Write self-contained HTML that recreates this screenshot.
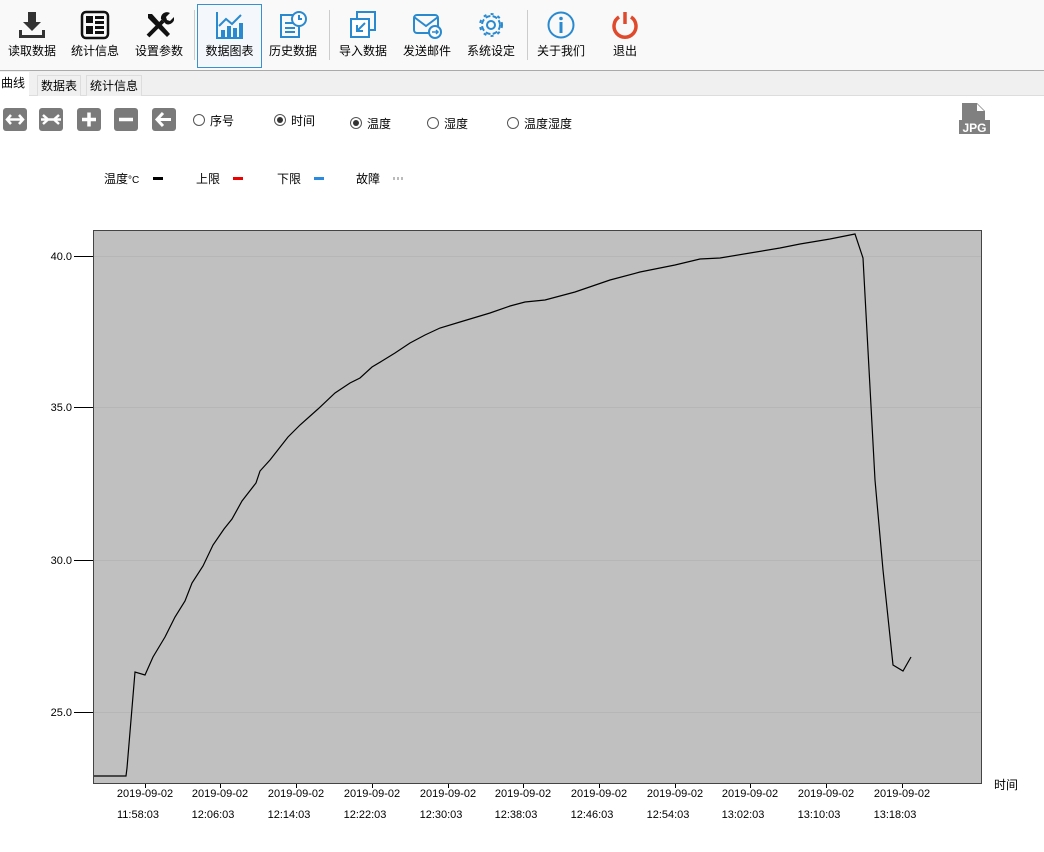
<!DOCTYPE html>
<html><head><meta charset="utf-8"><style>
body{margin:0;width:1044px;height:852px;background:#fff;font-family:"Liberation Sans","Noto Sans CJK SC",sans-serif;position:relative;overflow:hidden}
.tb{position:absolute;left:0;top:0;width:1044px;height:70px;background:#f9f9f9;border-bottom:1px solid #aaa}
.btn{position:absolute;top:4px;width:64px;height:64px;text-align:center;font-size:12px;color:#000}
.btn svg{position:absolute;left:17px;top:6px}
.btn span{position:absolute;left:0;right:0;top:38px}
.sep{position:absolute;top:10px;width:1px;height:50px;background:#ccc}
.tabs{position:absolute;top:71px;left:0;width:1044px;height:24px;background:#f0f0f0;border-bottom:1px solid #ddd}
.tab{position:absolute;top:4px;height:20px;font-size:12px;line-height:20px;padding:0 3px;border:1px solid #ddd;border-bottom:none;background:#f0f0f0}
.ib{position:absolute;top:108px;width:24px;height:23px;background:#7a7a7a;border-radius:3px}
.rd{position:absolute;font-size:12px}
.rd i{display:inline-block;width:10px;height:10px;border:1px solid #555;border-radius:50%;vertical-align:-1px;margin-right:5px;position:relative;background:#fff}
.rd i.on:after{content:"";position:absolute;left:2px;top:2px;width:6px;height:6px;border-radius:50%;background:#333}
.lg{position:absolute;top:170px;font-size:12px}
</style></head><body>
<div class="tb">
<div class="btn" style="left:0"><svg width="30" height="30" viewBox="0 0 30 30"><path d="M11 2h8v10h5l-9 9-9-9h5z" fill="#333"/><path d="M2 20v8h26v-8h-3v5H5v-5z" fill="#333"/></svg><span>读取数据</span></div>
<div class="btn" style="left:63px"><svg width="30" height="30" viewBox="0 0 30 30"><rect x="2" y="2" width="26" height="26" rx="4" fill="none" stroke="#111" stroke-width="2.5"/><rect x="6" y="6" width="7" height="7" fill="#111"/><rect x="6" y="16" width="7" height="8" fill="#111"/><rect x="15" y="6" width="9" height="3" fill="#111"/><rect x="15" y="11" width="9" height="3" fill="#111"/><rect x="15" y="16" width="9" height="3" fill="#111"/><rect x="15" y="21" width="9" height="3" fill="#111"/></svg><span>统计信息</span></div>
<div class="btn" style="left:127px"><svg width="30" height="30" viewBox="0 0 30 30"><path d="M4 4l4 0 18 20-3 3L4 8z" fill="#111"/><path d="M4 26l15-15" stroke="#111" stroke-width="4"/><path d="M17 9a6 6 0 0 1 9-6l-4 4 1 3 3 1 4-4a6 6 0 0 1-8 7z" fill="#111"/></svg><span>设置参数</span></div>
<div class="sep" style="left:194px"></div>
<div class="btn" style="left:197px;border:1px solid #3a8fd0;height:62px;width:63px;background:#f4f8fc"><svg width="30" height="30" viewBox="0 0 30 30" style="top:5px"><path d="M2 2v26h26" fill="none" stroke="#2a8ad0" stroke-width="2"/><rect x="6" y="20" width="4" height="7" fill="#2a8ad0"/><rect x="12" y="16" width="4" height="11" fill="#2a8ad0"/><rect x="18" y="18" width="4" height="9" fill="#2a8ad0"/><rect x="24" y="13" width="4" height="14" fill="#2a8ad0"/><path d="M4 16l7-7 6 5 9-9" fill="none" stroke="#2a8ad0" stroke-width="2"/></svg><span style="top:37px">数据图表</span></div>
<div class="btn" style="left:261px"><svg width="30" height="30" viewBox="0 0 30 30"><rect x="3" y="5" width="18" height="22" fill="none" stroke="#2a8ad0" stroke-width="2"/><path d="M7 13h8M7 18h10M7 22h10" stroke="#2a8ad0" stroke-width="2"/><circle cx="21" cy="9" r="7" fill="#fff" stroke="#2a8ad0" stroke-width="2"/><path d="M21 5v4h3" stroke="#2a8ad0" stroke-width="2" fill="none"/></svg><span>历史数据</span></div>
<div class="sep" style="left:329px"></div>
<div class="btn" style="left:331px"><svg width="30" height="30" viewBox="0 0 30 30"><rect x="9" y="2" width="18" height="18" fill="none" stroke="#2a8ad0" stroke-width="2"/><rect x="3" y="9" width="18" height="18" fill="#fff" stroke="#2a8ad0" stroke-width="2"/><path d="M17 13l-8 8M9 15v6h6" stroke="#2a8ad0" stroke-width="2" fill="none"/></svg><span>导入数据</span></div>
<div class="btn" style="left:395px"><svg width="30" height="30" viewBox="0 0 30 30"><rect x="2" y="5" width="24" height="18" rx="3" fill="none" stroke="#2a8ad0" stroke-width="2"/><path d="M2 7l12 9 12-9" stroke="#2a8ad0" stroke-width="2" fill="none"/><circle cx="23" cy="22" r="6" fill="#fff" stroke="#2a8ad0" stroke-width="2"/><path d="M20 22h6M24 20l2 2-2 2" stroke="#2a8ad0" stroke-width="1.5" fill="none"/></svg><span>发送邮件</span></div>
<div class="btn" style="left:459px"><svg width="30" height="30" viewBox="0 0 30 30"><circle cx="15" cy="15" r="9" fill="none" stroke="#2a8ad0" stroke-width="2" stroke-dasharray="5 2.3"/><circle cx="15" cy="15" r="11" fill="none" stroke="#2a8ad0" stroke-width="2" stroke-dasharray="3 4.3"/><circle cx="15" cy="15" r="4" fill="none" stroke="#2a8ad0" stroke-width="2"/></svg><span>系统设定</span></div>
<div class="sep" style="left:527px"></div>
<div class="btn" style="left:529px"><svg width="30" height="30" viewBox="0 0 30 30"><circle cx="15" cy="15" r="12.5" fill="none" stroke="#2a8ad0" stroke-width="2"/><circle cx="15" cy="8.5" r="1.8" fill="#2a8ad0"/><rect x="13.5" y="12" width="3" height="11" fill="#2a8ad0"/></svg><span>关于我们</span></div>
<div class="btn" style="left:593px"><svg width="30" height="30" viewBox="0 0 30 30"><path d="M9 7A11 11 0 1 0 21 7" fill="none" stroke="#e04a2c" stroke-width="3.5"/><path d="M15 2v12" stroke="#e04a2c" stroke-width="3.5"/></svg><span>退出</span></div>
</div>
<div class="tabs">
<div class="tab" style="left:-3px;top:1px;height:24px;background:#fff;border-color:#fff">曲线</div>
<div class="tab" style="left:37px">数据表</div>
<div class="tab" style="left:86px">统计信息</div>
</div>
<div class="ib" style="left:3px"><svg width="24" height="23"><path d="M4 11.5h16M8 7l-4 4.5 4 4.5M16 7l4 4.5-4 4.5" stroke="#fff" stroke-width="2.5" fill="none"/></svg></div>
<div class="ib" style="left:39px"><svg width="24" height="23"><path d="M2 11.5h20M4 7l5 4.5-5 4.5M20 7l-5 4.5 5 4.5" stroke="#fff" stroke-width="2.5" fill="none"/></svg></div>
<div class="ib" style="left:77px"><svg width="24" height="23"><path d="M5 11.5h14M12 4.5v14" stroke="#fff" stroke-width="3.5"/></svg></div>
<div class="ib" style="left:114px"><svg width="24" height="23"><path d="M5 11.5h14" stroke="#fff" stroke-width="3.5"/></svg></div>
<div class="ib" style="left:152px"><svg width="24" height="23"><path d="M5 11.5h14M11 5l-6 6.5 6 6.5" stroke="#fff" stroke-width="3" fill="none"/></svg></div>
<div class="rd" style="left:193px;top:112px"><i></i>序号</div>
<div class="rd" style="left:274px;top:112px"><i class="on"></i>时间</div>
<div class="rd" style="left:350px;top:115px"><i class="on"></i>温度</div>
<div class="rd" style="left:427px;top:115px"><i></i>湿度</div>
<div class="rd" style="left:507px;top:115px"><i></i>温度湿度</div>
<svg style="position:absolute;left:958px;top:103px" width="34" height="32"><path d="M4 0h15l8 8v10H4z" fill="#808080"/><path d="M19 1v7h7z" fill="#fff"/><rect x="1" y="17" width="31" height="14" fill="#808080"/><text x="16.5" y="29" font-size="12" font-weight="bold" fill="#fff" text-anchor="middle" font-family="Liberation Sans">JPG</text></svg>
<div class="lg" style="left:104px">温度<span style="font-size:10px">°C</span></div><div style="position:absolute;left:153px;top:177px;width:10px;height:3px;background:#000"></div>
<div class="lg" style="left:196px">上限</div><div style="position:absolute;left:233px;top:177px;width:10px;height:3px;background:#e00"></div>
<div class="lg" style="left:277px">下限</div><div style="position:absolute;left:314px;top:177px;width:10px;height:3px;background:#2a8ae0"></div>
<div class="lg" style="left:356px">故障</div><div style="position:absolute;left:393px;top:177px;width:10px;height:3px;background:repeating-linear-gradient(90deg,#bbb 0 2px,transparent 2px 4px)"></div>
<svg style="position:absolute;left:0;top:0" width="1044" height="852">
<rect x="93.5" y="230.5" width="888" height="553" fill="#c0c0c0" stroke="#444"/>
<g stroke="#b6b6b6" stroke-width="1"><path d="M94 256.5h887M94 407.5h887M94 560.5h887M94 712.5h887"/></g>
<g stroke="#000"><path d="M74 256.5h19M74 407.5h19M74 560.5h19M74 712.5h19"/>
<path d="M145.5 784v4M220.5 784v4M296.5 784v4M372.5 784v4M448.5 784v4M523.5 784v4M599.5 784v4M675.5 784v4M750.5 784v4M826.5 784v4M902.5 784v4"/></g>
<g font-size="11" font-family="Liberation Sans" text-anchor="end"><text x="72" y="260">40.0</text><text x="72" y="411">35.0</text><text x="72" y="564">30.0</text><text x="72" y="716">25.0</text></g>
<polyline fill="none" stroke="#000" stroke-width="1.2" points="94,776 126,776 127,768 135,672 145,675 153,657 165,637 175,617 185,601 192,583 203,566 213,545 224,529 232,519 242,501 256,483 260,471 270,460 288,437 300,425 318,409 335,393 350,383 360,378 372,367 382,361 395,353 410,343 425,335 440,328 460,322 490,313 510,306 525,302 545,300 575,292 610,280 640,272 675,265 700,259 720,258 750,253 780,248 800,244 830,239 855,234 863,258 875,480 883,570 893,665 903,671 911,657"/>
<text x="994" y="789" font-size="12" font-family="Liberation Sans,Noto Sans CJK SC">时间</text>
<g font-size="11" font-family="Liberation Sans" text-anchor="middle">
<text x="145" y="797">2019-09-02</text><text x="138" y="818">11:58:03</text>
<text x="220" y="797">2019-09-02</text><text x="213" y="818">12:06:03</text>
<text x="296" y="797">2019-09-02</text><text x="289" y="818">12:14:03</text>
<text x="372" y="797">2019-09-02</text><text x="365" y="818">12:22:03</text>
<text x="448" y="797">2019-09-02</text><text x="441" y="818">12:30:03</text>
<text x="523" y="797">2019-09-02</text><text x="516" y="818">12:38:03</text>
<text x="599" y="797">2019-09-02</text><text x="592" y="818">12:46:03</text>
<text x="675" y="797">2019-09-02</text><text x="668" y="818">12:54:03</text>
<text x="750" y="797">2019-09-02</text><text x="743" y="818">13:02:03</text>
<text x="826" y="797">2019-09-02</text><text x="819" y="818">13:10:03</text>
<text x="902" y="797">2019-09-02</text><text x="895" y="818">13:18:03</text>
</g>
</svg>
</body></html>
